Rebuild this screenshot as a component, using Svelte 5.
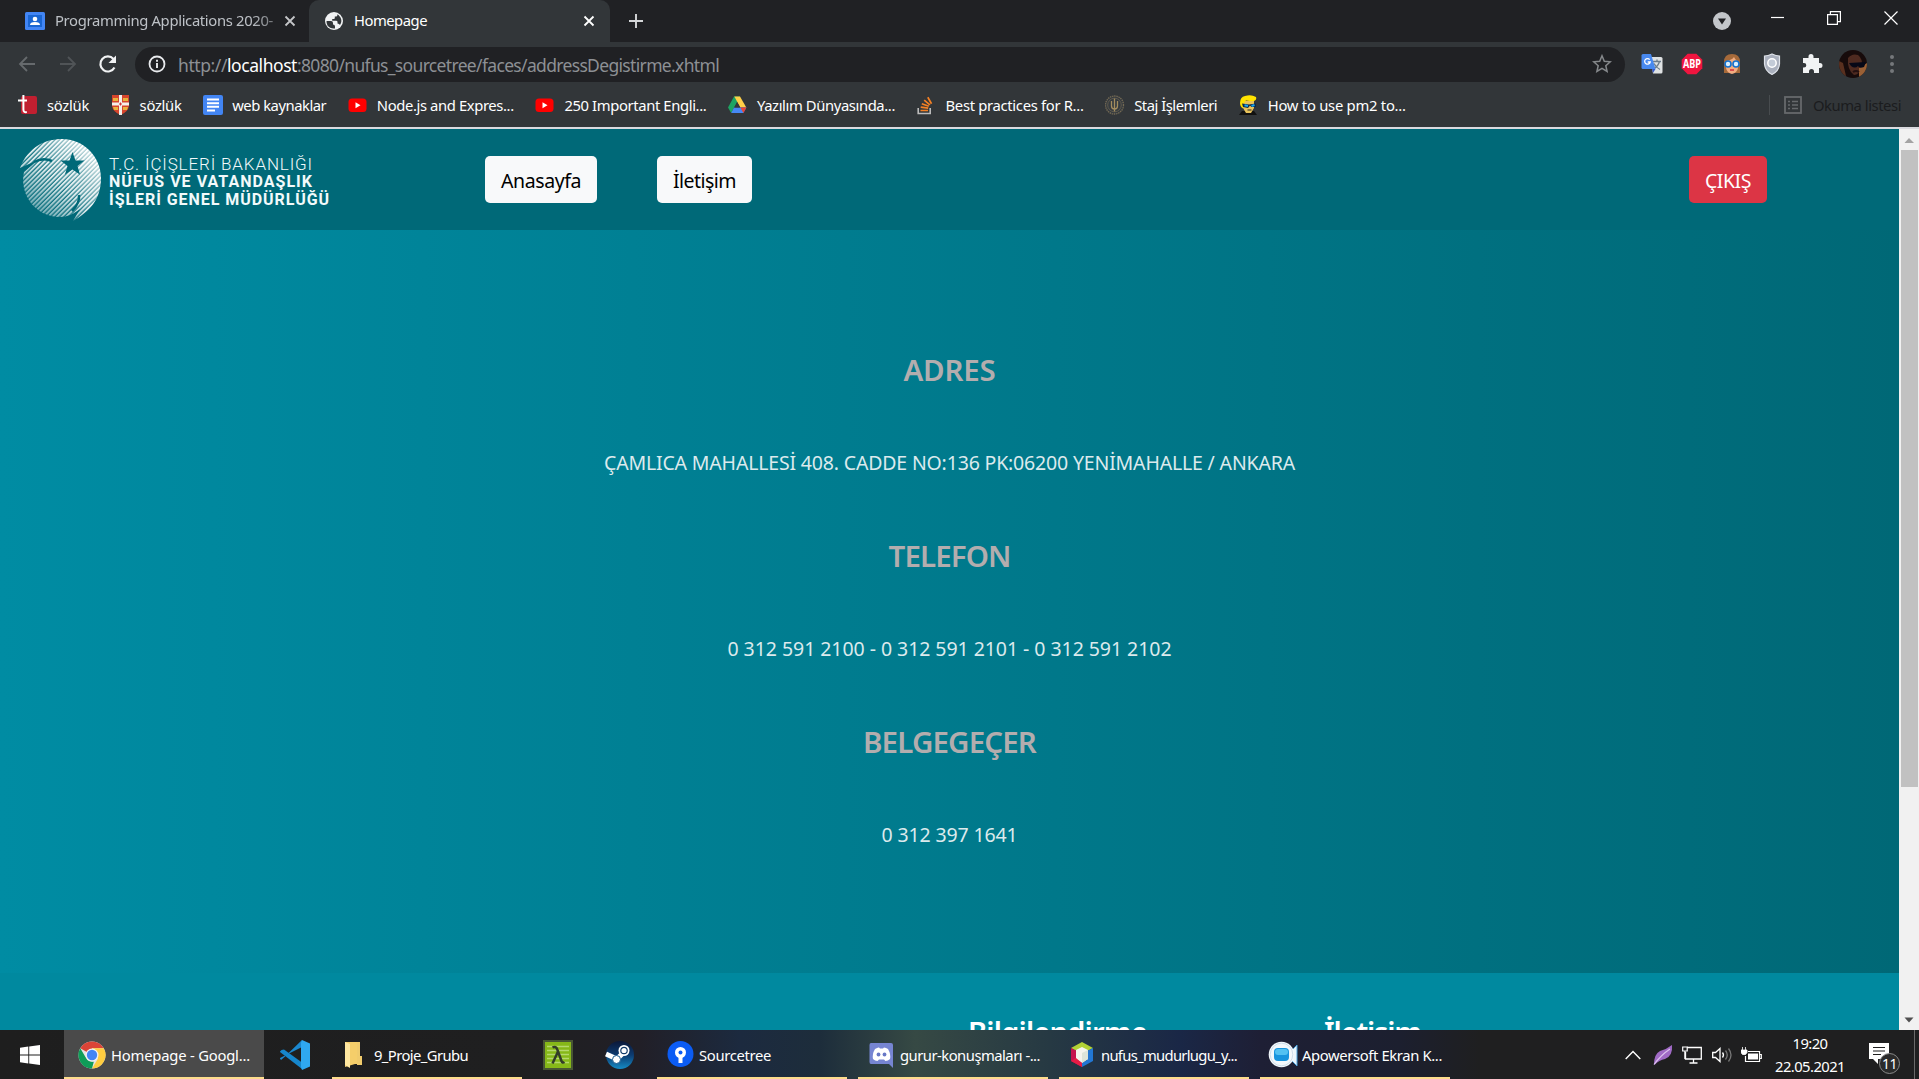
<script>
  // Adjusts letter spacing so a label takes exactly `width` pixels.
  function fit(node, width) {
    const natural = node.getBoundingClientRect().width;
    const count = [...node.textContent].length;
    node.style.letterSpacing = `${(width - natural) / count}px`;
  }

  const bookmarks = [
    { icon: 'tureng', label: 'sözlük', w: 42 },
    { icon: 'cambridge', label: 'sözlük', w: 42 },
    { icon: 'docs', label: 'web kaynaklar', w: 94 },
    { icon: 'youtube', label: 'Node.js and Expres...', w: 137 },
    { icon: 'youtube', label: '250 Important Engli...', w: 142 },
    { icon: 'drive', label: 'Yazılım Dünyasında...', w: 138 },
    { icon: 'stack', label: 'Best practices for R...', w: 138 },
    { icon: 'seal', label: 'Staj İşlemleri', w: 83 },
    { icon: 'blond', label: 'How to use pm2 to...', w: 138 }
  ];

  const sections = [
    { title: 'ADRES', tw: 92, text: 'ÇAMLICA MAHALLESİ 408. CADDE NO:136 PK:06200 YENİMAHALLE / ANKARA', w: 691 },
    { title: 'TELEFON', tw: 122, text: '0 312 591 2100 - 0 312 591 2101 - 0 312 591 2102', w: 444 },
    { title: 'BELGEGEÇER', tw: 173, text: '0 312 397 1641', w: 136 }
  ];

  const windows = [
    { icon: 'sourcetree', label: 'Sourcetree', w: 72 },
    { icon: 'discord', label: 'gurur-konuşmaları -...', w: 140 },
    { icon: 'netbeans', label: 'nufus_mudurlugu_y...', w: 136 },
    { icon: 'recorder', label: 'Apowersoft Ekran K...', w: 140 }
  ];
</script>

{#snippet icon(name)}
  {#if name === 'tureng'}
    <svg width="20" height="20" viewBox="0 0 20 20"><rect x="3" y="1" width="16" height="18" rx="2" fill="#c11f30" /><path d="M5.400 0v14.500q0 3.200 3.400 2.600M0 5.500h9" fill="none" stroke="#fff" stroke-width="2" /></svg>
  {:else if name === 'cambridge'}
    <svg width="20" height="20" viewBox="0 0 20 20"><path d="M1 0h17v11q-1 6-8.500 9q-7.500-3-8.500-9z" fill="#d6452c" /><path d="M2 3h5v3H2zm10 0h5v3h-5zM2 12h5v3H3zm10 0h5l-1 3h-4z" fill="#e9b23c" /><path d="M9.500 0v20M1 9h17" stroke="#f4efe9" stroke-width="3" /><path d="M8 9h3M9.500 7.500v3" stroke="#c33" stroke-width="1" /></svg>
  {:else if name === 'docs'}
    <svg width="20" height="20" viewBox="0 0 20 20"><rect width="20" height="20" rx="2" fill="#4285f4" /><path d="M4 4.500h12M4 8.200h12M4 11.800h12M4 15.500h8" stroke="#fff" stroke-width="1.900" /></svg>
  {:else if name === 'youtube'}
    <svg width="20" height="20" viewBox="0 0 20 20"><rect x="0.500" y="3.500" width="18" height="13.500" rx="3.500" fill="#f00" /><path d="M7.500 7.300v6l5-3z" fill="#fff" /></svg>
  {:else if name === 'drive'}
    <svg width="20" height="20" viewBox="0 0 20 20"><path d="M6 1.500h6L3.200 18L0 12.500z" fill="#1da462" /><path d="M6.300 1.500H12l6.300 11h-6z" fill="#ffcf48" /><path d="M3.200 18L6 12.500h12.400L15.300 18z" fill="#4688f4" /><path d="M12.400 12.500h6L15.400 18z" fill="#ea4335" /><path d="M9.200 7.200l-3 5.300h6z" fill="#323639" /></svg>
  {:else if name === 'stack'}
    <svg width="20" height="20" viewBox="0 0 20 20"><path d="M1.200 13v5.500h12V13" fill="none" stroke="#bcbbbb" stroke-width="1.600" /><path d="M3.500 15.500h7.500M3.700 12.200l7.500 1M4.800 8.700l7 2.500M7.200 5.200l5.700 4.700M10.800 2.300l3.700 6.400" stroke="#f48024" stroke-width="1.700" /></svg>
  {:else if name === 'seal'}
    <svg width="20" height="20" viewBox="0 0 20 20"><circle cx="9.500" cy="10" r="9" fill="#363b40" stroke="#746a54" stroke-width="1.300" stroke-dasharray="1.500 .7" /><circle cx="9.500" cy="10" r="6.800" fill="none" stroke="#5f5a4c" /><path d="M9.500 3.500v13M6.500 6v5q0 3 3 3t3-3V6" fill="none" stroke="#a48d5e" stroke-width="1.300" /></svg>
  {:else if name === 'blond'}
    <svg width="20" height="20" viewBox="0 0 20 20"><path d="M0 20l3-4h12l3 4z" fill="#111" /><path d="M4 6h11v7l-3 5H7l-3-5z" fill="#e9c35a" /><path d="M1 8Q1 2 6 1q6-2 11 1 1 3-2 4-5 0-8-.500-2 1-2 4l-1 4q-3-2-3-5.500z" fill="#ffe300" /><path d="M3 8.500l7 1 7-1v3.500h-4.500l-1.500-1.500-2 2.500-5-1z" fill="#0c2848" /><path d="M5.500 10.300l3.500.7m3.500 0l3-1" stroke="#18a5f0" stroke-width="2" /><path d="M8.500 15h4" stroke="#222" /></svg>
  {:else if name === 'sourcetree'}
    <svg width="28" height="28" viewBox="0 0 28 28"><circle cx="13.500" cy="13" r="13" fill="#0b5cf4" /><circle cx="13.500" cy="11.500" r="5.500" fill="#fff" /><path d="M11.500 16h4v6h-4z" fill="#fff" /><circle cx="13.500" cy="11.500" r="2" fill="#0b5cf4" /></svg>
  {:else if name === 'discord'}
    <svg width="28" height="28" viewBox="0 0 28 28"><path d="M3 2h20q2 0 2 2v23l-4-4H3q-1.500 0-1.500-2V4Q1.500 2 3 2z" fill="#7685d2" /><path d="M7 8q3-2 4-1.500l1 1h3l1-1q2 0 4 1.500 3 5 2 10-2 2-4.500 2L16 18.500h-5L9.500 20Q7 20 5 18q-1-5 2-10z" fill="#fff" /><circle cx="10.500" cy="13.500" r="1.900" fill="#6878c6" /><circle cx="16.500" cy="13.500" r="1.900" fill="#6878c6" /></svg>
  {:else if name === 'netbeans'}
    <svg width="28" height="28" viewBox="0 0 28 28"><path d="M13 1l11 6-11 6L2 7z" fill="#b2d235" /><path d="M2 7l6 3v8l5 4v4L2 20z" fill="#c5124f" /><path d="M24 7l-6 3v9l-5 3v4l11-6z" fill="#2277d3" /><path d="M7 9l6-3 6 3v9l-6 4-6-4z" fill="#f4f4ee" /><path d="M13 12l6-3v9l-6 4z" fill="#dce4d9" /><path d="M2 20l5-3 6 5v4z" fill="#e51c45" /></svg>
  {:else if name === 'recorder'}
    <svg width="32" height="28" viewBox="0 0 32 28"><path d="M22 11l7-7v21l-7-7z" fill="#eaf6fd" stroke="#4ba1dc" /><circle cx="13.500" cy="13.500" r="12.800" fill="#f3f8fc" /><circle cx="13.500" cy="13.500" r="11.300" fill="none" stroke="#c3d6e6" stroke-width=".8" /><rect x="6" y="7" width="15" height="13" rx="4" fill="#1794de" /><rect x="7" y="8" width="13" height="6" rx="3" fill="#52c1f2" /></svg>
  {/if}
{/snippet}

<div class="screen">
  <div class="tabs">
    <div class="tab first">
      <svg width="20" height="18" viewBox="0 0 20 18"><rect width="20" height="18" rx="1.500" fill="#4285f4" /><rect x="3" y="3" width="14" height="12" fill="#1a66d2" /><circle cx="10" cy="7" r="2.300" fill="#fff" /><path d="M5 13q0-3 5-3t5 3z" fill="#fff" /></svg>
      <span class="title fade"><span class="t" use:fit={218}>Programming Applications 2020-</span></span>
      <svg class="x" width="12" height="12" viewBox="0 0 12 12"><path d="M1.500 1.500l9 9m0-9l-9 9" stroke="#c4c6c8" stroke-width="1.800" /></svg>
    </div>
    <div class="tab active">
      <svg width="20" height="20" viewBox="0 0 20 20"><circle cx="10" cy="10" r="9" fill="#f1f3f4" /><path d="M2.500 10h4.500q2 0 2 2v1.500q2 0 2 2V17.500Q6 18 3.500 14.500 2.300 12 2.500 10z" fill="#323639" /><path d="M11.500 2.600q3.500.8 5 3.900.9 1.700.9 3.500-.2 2.500-1.400 4-.7-1.500-2.500-1.500V11q0-1.200-1.500-1.200H8.200V8h1.600q1 0 1-1V5.500h1.700q1.500-1 .5-2.300z" fill="#323639" /></svg>
      <span class="title"><span class="t" use:fit={73}>Homepage</span></span>
      <svg class="x" width="12" height="12" viewBox="0 0 12 12"><path d="M1.500 1.500l9 9m0-9l-9 9" stroke="#fff" stroke-width="1.800" /></svg>
    </div>
    <svg class="plus" width="16" height="16" viewBox="0 0 16 16"><path d="M8 1v14M1 8h14" stroke="#d5d7d9" stroke-width="1.900" /></svg>
    <div class="controls">
      <svg class="search" width="18" height="18" viewBox="0 0 18 18"><circle cx="9" cy="9" r="9" fill="#c3c6ca" /><path d="M5 6.500h8l-4 6z" fill="#202124" /></svg>
      <svg width="14" height="14" viewBox="0 0 14 14"><path d="M1 6.500h13" stroke="#fff" stroke-width="1.200" /></svg>
      <svg width="14" height="14" viewBox="0 0 14 14"><path d="M.6 3.600h9.800v9.800H.6zM3.400 3.500V.6h10v10H10.500" fill="none" stroke="#fff" stroke-width="1.200" /></svg>
      <svg width="14" height="14" viewBox="0 0 14 14"><path d="M.5.500l13 13m0-13l-13 13" stroke="#fff" stroke-width="1.200" /></svg>
    </div>
  </div>

  <div class="toolbar">
    <svg width="18" height="18" viewBox="0 0 18 18"><path d="M17 9H2m7-7L2 9l7 7" fill="none" stroke="#666a6d" stroke-width="1.800" /></svg>
    <svg class="forward" width="18" height="18" viewBox="0 0 18 18"><path d="M1 9h15M9 2l7 7-7 7" fill="none" stroke="#505457" stroke-width="1.800" /></svg>
    <svg class="reload" width="20" height="20" viewBox="0 0 20 20"><path d="M16.500 13.500A7.500 7.500 0 1 1 15.500 5" fill="none" stroke="#f1f3f4" stroke-width="2.200" /><path d="M18 1.500V9h-7.500z" fill="#f1f3f4" /></svg>
    <div class="omnibox">
      <svg width="18" height="18" viewBox="0 0 18 18"><circle cx="9" cy="9" r="7.500" fill="none" stroke="#e8eaed" stroke-width="1.800" /><path d="M9 8v5M9 4.700v2" stroke="#e8eaed" stroke-width="1.900" /></svg>
      <div class="url"><span class="t" use:fit={49}>http://</span><span class="t host" use:fit={70}>localhost</span><span class="t" use:fit={422}>:8080/nufus_sourcetree/faces/addressDegistirme.xhtml</span></div>
      <svg class="star" width="20" height="20" viewBox="0 0 20 20"><path d="M10 1.800l2.300 5.500 6 .5-4.500 3.900 1.300 5.800L10 14.400l-5.100 3.100 1.300-5.800-4.500-3.900 6-.5z" fill="none" stroke="#85888b" stroke-width="1.500" /></svg>
    </div>
    <div class="extensions">
      <svg width="22" height="22" viewBox="0 0 22 22"><path d="M9 4h11q1.500 0 1.500 1.500V19q0 1.500-1.500 1.500h-8z" fill="#dfe2e3" /><path d="M12 8.500h8M16 6.500v2m2.500 0q-1.500 5-5.500 7m0-5q2 4 6 6" fill="none" stroke="#6b7c8a" stroke-width="1.300" /><path d="M2 1h8l4.500 15H2Q.5 16 .5 14.500v-12Q.5 1 2 1z" fill="#4889ef" /><path d="M11 16h3.500L12 20z" fill="#3457c9" /><path d="M8.700 6.700A2.800 2.800 0 1 0 9.200 9H6.700" fill="none" stroke="#fff" stroke-width="1.300" /></svg>
      <svg width="22" height="22" viewBox="0 0 22 22"><path d="M6.700.7h8.600l6 6v8.600l-6 6H6.700l-6-6V6.700z" fill="#f0153f" /><text x="11" y="15" text-anchor="middle" textLength="18" lengthAdjust="spacingAndGlyphs" font-size="11.500" font-weight="700" fill="#fff">ABP</text></svg>
      <svg width="22" height="22" viewBox="0 0 22 22"><path d="M3 20V9q0-8 8-8t8 8v11z" fill="#a66a3a" /><path d="M5 8q6-1 8-4 2 4 4 4v7q-1 5-6 6-5-1-6-6z" fill="#f3ad80" /><circle cx="7" cy="11" r="3" fill="#d9efff" stroke="#1271cf" stroke-width="1.600" /><circle cx="15" cy="11" r="3" fill="#d9efff" stroke="#1271cf" stroke-width="1.600" /><path d="M9 17h4" stroke="#d12e3b" stroke-width="1.500" /></svg>
      <svg width="22" height="22" viewBox="0 0 22 22"><path d="M11 1q4 2 7.500 2v8q-.5 7-7.500 10.500Q4 18 3.500 11V3Q7 3 11 1z" fill="#aab0bd" stroke="#dfe3ea" stroke-width="1.200" /><circle cx="11" cy="10" r="4.200" fill="#c3cbd7" stroke="#fff" stroke-width="1.500" /></svg>
      <svg width="22" height="22" viewBox="0 0 22 22"><path d="M2 6h5.500V4.500a2.500 2.500 0 0 1 5 0V6H18v5h1a2.500 2.500 0 0 1 0 5h-1v5h-5v-1.500a2.500 2.500 0 0 0-5 0V21H2v-5.500h1a2.300 2.300 0 0 0 0-4.600H2z" fill="#f1f3f4" transform="translate(0 -1)" /></svg>
      <svg class="avatar" width="28" height="28" viewBox="0 0 28 28"><defs><clipPath id="face"><circle cx="14" cy="14" r="14" /></clipPath></defs><g clip-path="url(#face)"><rect width="28" height="28" fill="#170b0b" /><path d="M9 8q4-5 10-3 5 4 4 12-3 8-8 8Q8 20 9 8z" fill="#4e2a20" /><path d="M20 18l8-5v9l-8 6z" fill="#9a6035" /><path d="M0 11l4 2 3 13H0z" fill="#59301f" /><path d="M10 13l17-1-2 5q-5 2-6-1-3 3-7 0z" fill="#060817" /><path d="M14 22q3-2 6 0" stroke="#241010" stroke-width="2" fill="none" /></g></svg>
      <svg class="dots" width="6" height="20" viewBox="0 0 6 20"><circle cx="3" cy="3" r="2" fill="#75787b" /><circle cx="3" cy="10" r="2" fill="#75787b" /><circle cx="3" cy="17" r="2" fill="#75787b" /></svg>
    </div>
  </div>

  <div class="bookmarks">
    {#each bookmarks as b}
      <div class="bookmark">{@render icon(b.icon)}<span class="t" use:fit={b.w}>{b.label}</span></div>
    {/each}
    <div class="reading">
      <svg width="18" height="18" viewBox="0 0 18 18"><rect x="1" y="1" width="16" height="16" fill="none" stroke="#66696c" stroke-width="1.800" /><path d="M4 5.500h2m2 0h6M4 9h2m2 0h6M4 12.500h2m2 0h6" stroke="#66696c" stroke-width="1.600" /></svg>
      <span class="t" use:fit={88}>Okuma listesi</span>
    </div>
  </div>

  <div class="viewport">
    <div class="page">
      <header>
        <div class="logo">
          <svg width="86" height="86" viewBox="0 0 86 86">
            <defs>
              <pattern id="stripes" width="3.200" height="3.200" patternUnits="userSpaceOnUse" patternTransform="rotate(45)"><rect width="3.200" height="3.200" fill="#fff" fill-opacity=".12" /><rect width="1.900" height="3.200" fill="#fff" /></pattern>
              <linearGradient id="fadeout" x1=".8" y1=".15" x2=".15" y2=".9"><stop offset="0" stop-color="#fff" /><stop offset=".5" stop-color="#ddd" /><stop offset="1" stop-color="#666" /></linearGradient>
              <linearGradient id="glow" x1=".95" y1=".15" x2=".45" y2=".55"><stop offset="0" stop-color="#fff" stop-opacity=".85" /><stop offset="1" stop-color="#fff" stop-opacity="0" /></linearGradient>
              <mask id="globe"><path d="M2 31C10 10 27 2 44 2c21 0 39 17 39 39 0 22-12 34-28 43l7-12C56 77 49 80 42 80 18 80 1 58 6 35l14-12z" fill="url(#fadeout)" /><path d="M54.500 15l3 8.500h9l-7 5.500 2.600 8.700-7.600-5.200-7.600 5.200 2.600-8.700-7-5.500h9z" fill="#000" /><path d="M16 25q9-5 18-1M61 58q1 8-7 16" fill="none" stroke="#000" stroke-width="2.500" /></mask>
            </defs>
            <g mask="url(#globe)"><rect width="86" height="86" fill="url(#stripes)" /><rect width="86" height="86" fill="url(#glow)" /></g>
          </svg>
          <div class="names">
            <span class="t light" use:fit={204}>T.C. İÇİŞLERİ BAKANLIĞI</span>
            <span class="t" use:fit={204}>NÜFUS VE VATANDAŞLIK</span>
            <span class="t" use:fit={221}>İŞLERİ GENEL MÜDÜRLÜĞÜ</span>
          </div>
        </div>
        <nav>
          <button><span class="t" use:fit={80}>Anasayfa</span></button>
          <button><span class="t" use:fit={63}>İletişim</span></button>
        </nav>
        <button class="exit"><span class="t" use:fit={46}>ÇIKIŞ</span></button>
      </header>
      <main>
        {#each sections as s}
          <section>
            <h3><span class="t" use:fit={s.tw}>{s.title}</span></h3>
            <p><span class="t" use:fit={s.w}>{s.text}</span></p>
          </section>
        {/each}
      </main>
      <footer>
        <h4><span class="t" use:fit={179}>Bilgilendirme</span></h4>
        <h4><span class="t" use:fit={97}>İletişim</span></h4>
      </footer>
    </div>
    <div class="scrollbar">
      <svg width="20" height="21" viewBox="0 0 20 21"><path d="M5.500 14L10 9l5 5z" fill="#a3a3a3" /></svg>
      <div class="thumb"></div>
      <svg width="20" height="20" viewBox="0 0 20 20"><path d="M5.500 7.500h9L10 12.500z" fill="#505050" /></svg>
    </div>
  </div>

  <div class="taskbar">
    <div class="start"><svg width="20" height="20" viewBox="0 0 20 20"><path d="M0 2.800L8.300 1.600v7.900H0zM9.200 1.500L20 0v9.500H9.200zM0 10.400h8.300v8L0 17.200zM9.200 10.400H20V20L9.200 18.500z" fill="#fff" /></svg></div>
    <div class="task current">
      <svg width="28" height="28" viewBox="0 0 28 28"><circle cx="14" cy="14" r="13.500" fill="#e4e4e4" /><path d="M14 14L2.300 7.200A13.500 13.500 0 0 1 25.700 7.200H14z" fill="#db4437" /><path d="M14 7.200h11.700A13.500 13.500 0 0 1 14 27.500l6-10z" fill="#ffcd40" /><path d="M2.300 7.200l6 10.300q2.500 4 7.500 3.200L14 27.500A13.500 13.500 0 0 1 2.300 7.200z" fill="#0f9d58" /><circle cx="14" cy="14" r="6.500" fill="#f1f1f1" /><circle cx="14" cy="14" r="5.200" fill="#4285f4" /></svg>
      <span class="t" use:fit={139}>Homepage - Googl...</span>
    </div>
    <div class="pin"><svg width="30" height="30" viewBox="0 0 30 30"><path d="M22 0L4.500 17 1 20l-1-1.500V18L22 7z" fill="#1b87ce" /><path d="M1.500 10L0 11.500V12l22 17V22.500L4 9.500z" fill="#1686cc" /><path d="M22 0l8 3.500v23L22 30l-1-3V3z" fill="#2fa8f0" /></svg></div>
    <div class="task folder">
      <svg width="20" height="28" viewBox="0 0 20 28"><path d="M1 1h14v22h-4L1 26z" fill="#f5ce6a" /><path d="M13 1h3v14h2v9h-5z" fill="#f0cb6c" /><path d="M1 1l5 2v24l-5-3z" fill="#ffe7a0" /></svg>
      <span class="t" use:fit={94}>9_Proje_Grubu</span>
    </div>
    <div class="pin lambda"><svg width="30" height="30" viewBox="0 0 30 30"><rect x="1" y="1" width="28" height="28" fill="#86b818" stroke="#485634" stroke-width="2" /><path d="M4 6.500h22M4 10.500h22M4 14.500h22M4 18.500h22M4 22.500h22" stroke="#b5d86c" stroke-width="1.300" /><path d="M9.500 7.500q3.500-2 5 2.500l4 11q.8 2.500 3 1M14.800 12L9.500 23.500" fill="none" stroke="#323c28" stroke-width="2.500" /></svg></div>
    <div class="pin"><svg width="30" height="30" viewBox="0 0 30 30"><defs><linearGradient id="steam" x2="0" y2="1"><stop offset="0" stop-color="#0c1838" /><stop offset=".5" stop-color="#0c3b70" /><stop offset="1" stop-color="#168bc5" /></linearGradient></defs><circle cx="15" cy="15" r="14" fill="url(#steam)" /><path d="M1 14l11 5 7-7" fill="none" stroke="#fff" stroke-width="5" /><circle cx="19" cy="10.500" r="5.500" fill="#fff" /><circle cx="19" cy="10.500" r="3.200" fill="#fff" stroke="#123a68" stroke-width="1.200" /><circle cx="11.500" cy="19.500" r="4" fill="#fff" stroke="#17588d" /></svg></div>
    <div class="windows">
      {#each windows as w}
        <div class="task">{@render icon(w.icon)}<span class="t" use:fit={w.w}>{w.label}</span></div>
      {/each}
    </div>
    <div class="tray">
      <svg width="16" height="10" viewBox="0 0 16 10"><path d="M.7 9L8 1.500 15.300 9" fill="none" stroke="#fff" stroke-width="1.400" /></svg>
      <svg class="feather" width="20" height="20" viewBox="0 0 20 20"><path d="M1 19.500Q1 9 7 6 14 4 19 0q1 11-7 14-6 1-10 5.500z" fill="#a06ac5" /><path d="M1 19.500Q8 10 17 4" fill="none" stroke="#ddc3ee" stroke-width="1.200" /></svg>
      <svg class="net" width="20" height="18" viewBox="0 0 20 18"><path d="M5 1.500h14.300v11.500H3.500V6M11.500 13v3.500M7.500 17h8" fill="none" stroke="#fff" stroke-width="1.300" /><path d="M.7 1h4.500v4H.7zM2.900 5v8" fill="none" stroke="#fff" stroke-width="1.200" /></svg>
      <svg class="sound" width="21" height="18" viewBox="0 0 21 18"><path d="M.7 6.500h2.800L8 2.500v13l-4.500-4H.7z" fill="none" stroke="#fff" stroke-width="1.300" /><path d="M10.500 6.500q2 2.500 0 5" fill="none" stroke="#fff" stroke-width="1.300" /><path d="M13.500 4.500q3.500 4.500 0 9M16.500 2.500q5 6.500 0 13" fill="none" stroke="#777" stroke-width="1.300" /></svg>
      <svg class="battery" width="21" height="16" viewBox="0 0 21 16"><path d="M7 4.500h11.500v10H4.500V9M19 7.500h1.300v4H19" fill="none" stroke="#fff" stroke-width="1.200" /><rect x="7" y="6.500" width="10" height="6" fill="#fff" /><path d="M1.500 0v3m3-3v3M0 3h6v2.500L4.500 7.500h-3L0 5.500z" fill="#fff" stroke="#fff" stroke-width=".8" /></svg>
      <div class="clock"><span class="t" use:fit={35}>19:20</span><span class="t" use:fit={70}>22.05.2021</span></div>
      <div class="notice">
        <svg width="20" height="22" viewBox="0 0 20 22"><path d="M0 0h20v16H9v5l-5-5H0z" fill="#fff" /><path d="M4 4.500h12M4 8h12M4 11.500h8" stroke="#1f1f1f" stroke-width="1.200" /></svg>
        <span class="count">11</span>
      </div>
      <i class="peek"></i>
    </div>
  </div>
</div>

<style>
  :global(body) { margin: 0; overflow: hidden; background: #202124; }
  .screen { width: 1919px; height: 1079px; display: flex; flex-direction: column; overflow: hidden; font-family: 'Noto Sans', 'Open Sans', sans-serif; font-size: 14.800px; color: #fff; }
  .screen * { box-sizing: border-box; }
  svg { display: block; flex: none; }
  .t { display: inline-block; white-space: pre; }

  .tabs { height: 42px; flex: none; display: flex; background: #202124; }
  .tab { display: flex; align-items: center; height: 42px; }
  .first { width: 309px; padding-left: 25px; color: #bdc1c6; }
  .title { width: 218px; margin: 0 0 2px 10px; line-height: 20px; overflow: hidden; }
  .fade { mask-image: linear-gradient(90deg, #000 90%, #0008); }
  .first .x { margin-left: 11px; }
  .active { width: 301px; padding-left: 15px; background: #323639; border-radius: 10px 10px 0 0; }
  .active .x { margin-left: 11px; }
  .plus { margin: 13px 0 0 18px; }
  .controls { margin-left: auto; display: flex; align-items: center; height: 36px; gap: 43px; padding-right: 21px; }
  .controls .search { position: relative; top: 3px; margin-right: -4px; }

  .toolbar { height: 44px; flex: none; display: flex; align-items: center; padding-left: 18px; background: #323639; }
  .forward { margin-left: 23px; }
  .reload { margin-left: 21px; }
  .omnibox { width: 1490px; height: 35px; margin-left: 17px; border-radius: 18px; background: #202124; display: flex; align-items: center; padding: 0 13px; }
  .url { margin: 1px 0 0 12px; font-size: 17.500px; line-height: 24px; color: #8d9094; display: flex; }
  .host { color: #fff; }
  .star { margin-left: auto; }
  .extensions { display: flex; align-items: center; gap: 18px; margin-left: 16px; }
  .avatar { margin-left: -2px; }
  .dots { margin-left: 4px; }

  .bookmarks { height: 41px; flex: none; display: flex; align-items: center; gap: 21.600px; padding: 0 18px 4px; background: #323639; line-height: 20px; }
  .bookmark { display: flex; gap: 9px; align-items: center; }
  .reading { display: flex; align-items: center; gap: 11px; height: 20px; margin-left: auto; padding-left: 14px; border-left: 1px solid #484c4f; color: #1b1c1e; }

  .viewport { height: 903px; flex: none; display: flex; border-top: 2px solid #dadadf; }
  .page { width: 1899px; overflow: hidden; display: flex; flex-direction: column; }
  header { height: 101px; flex: none; display: flex; align-items: center; background: #006978; padding: 0 132px 0 18px; }
  .logo { width: 467px; display: flex; align-items: center; }
  .names { margin: 4px 0 0 5px; display: flex; flex-direction: column; align-items: flex-start; font-family: Roboto, sans-serif; font-size: 16px; font-weight: 700; line-height: 18px; color: #f2fafb; }
  .light { font-weight: 300; font-size: 17px; }
  nav { display: flex; gap: 60px; }
  button { height: 47px; border: 0; border-radius: 5px; padding: 2px 16px 0; background: #f8f9fa; color: #000; font: 400 19.500px/30px 'Noto Sans', sans-serif; }
  .exit { margin-left: auto; background: #dc3545; color: #fff; }
  main { height: 743px; flex: none; display: flex; flex-direction: column; align-items: center; padding-top: 117px; background: linear-gradient(90deg, #008ca3, #006876); }
  section { height: 186px; text-align: center; }
  h3, h4, p { margin: 0; }
  h3 { font-size: 29.500px; font-weight: 600; line-height: 46px; color: #b3adae; }
  p { margin-top: 55px; font-size: 19.500px; line-height: 30px; color: #dceaed; }
  footer { flex: 1; min-height: 0; overflow: hidden; display: flex; background: #00899f; padding: 35px 0 0 968px; gap: 177px; }
  h4 { font-size: 29px; font-weight: 600; line-height: 48px; height: 48px; }

  .scrollbar { width: 20px; background: #f1f1f1; display: flex; flex-direction: column; }
  .thumb { width: 17px; height: 637px; margin: 0 0 auto 2px; background: #c1c1c1; }

  .taskbar { height: 49px; flex: none; display: flex; line-height: 20px; background: linear-gradient(90deg, #1e1e1e 0, #1f1f20 520px, #211f27 640px, #1c2a3f 740px, #1d2d3b 820px, #364944 915px, #263943 1050px, #1a2746 1180px, #1e1f35 1260px, #1c1f2f 1400px, #1f1f20 1480px); }
  .start { width: 64px; padding: 15px 0 0 20px; }
  .task { width: 190px; height: 49px; padding-left: 10px; display: flex; align-items: center; gap: 4px; border-bottom: 2px solid #fddc8c; padding-top: 2px; }
  .current { width: 200px; padding-left: 14px; gap: 5px; background: #4a4a4a; }
  .pin { width: 62px; display: flex; justify-content: center; padding-top: 10px; }
  .folder { margin-left: 6px; padding-left: 12px; gap: 10px; }
  .lambda { margin-left: 5px; }
  .windows { display: flex; gap: 11px; margin-left: 6px; }
  .windows .task:last-child { padding-left: 8px; gap: 2px; }
  .tray { margin-left: auto; display: flex; align-items: center; height: 49px; }
  .feather { margin-left: 12px; }
  .net { margin-left: 9px; }
  .sound { margin-left: 10px; }
  .battery { margin-left: 8px; }
  .clock { width: 84px; margin-left: 6px; display: flex; flex-direction: column; align-items: center; gap: 3px; }
  .notice { position: relative; margin: -2px 0 0 17px; }
  .count { position: absolute; left: 10px; top: 10px; width: 21px; height: 21px; border: 1px solid #8a8a8a; border-radius: 50%; background: #2b2b2b; font-size: 14px; letter-spacing: -.5px; line-height: 19px; text-align: center; }
  .peek { width: 1px; height: 49px; margin: 0 4px 0 25px; background: #6a6a6a; }
</style>
